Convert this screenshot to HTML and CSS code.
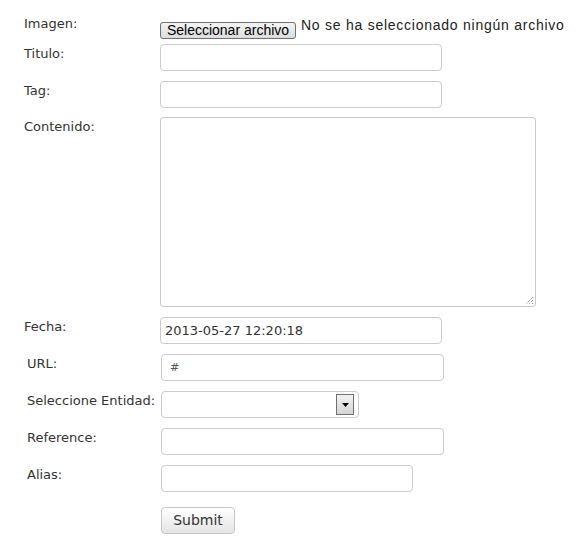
FILE: index.html
```html
<!DOCTYPE html>
<html lang="es">
<head>
<meta charset="utf-8">
<title>Formulario</title>
<link rel="stylesheet" href="styles.css">
</head>
<body>
<form class="form">
  <div class="group group-a">
    <div class="row row-file">
      <label class="label">Imagen:</label>
      <div class="file">
        <span class="file-btn">Seleccionar archivo</span>
        <span class="file-text">No se ha seleccionado ningún archivo</span>
      </div>
    </div>
    <div class="row">
      <label class="label">Titulo:</label>
      <div class="input w282"></div>
    </div>
    <div class="row">
      <label class="label">Tag:</label>
      <div class="input w282"></div>
    </div>
    <div class="row row-area">
      <label class="label">Contenido:</label>
      <div class="textarea">
        <svg class="grip" width="9" height="9" viewBox="0 0 9 9"><path d="M8 1 L1 8 M8 4 L4 8 M8 7 L7 8" stroke="#666" stroke-width="1" stroke-dasharray="1 1" fill="none"/></svg>
      </div>
    </div>
    <div class="row">
      <label class="label">Fecha:</label>
      <div class="input w282"><span class="value">2013-05-27 12:20:18</span></div>
    </div>
  </div>
  <div class="group group-b">
    <div class="row">
      <label class="label">URL:</label>
      <div class="input w283"><span class="value small">#</span></div>
    </div>
    <div class="row">
      <label class="label">Seleccione Entidad:</label>
      <div class="select">
        <span class="arrow"><svg width="7" height="4" viewBox="0 0 7 4"><path d="M0 0 H7 L3.5 4 Z" fill="#000"/></svg></span>
      </div>
    </div>
    <div class="row">
      <label class="label">Reference:</label>
      <div class="input w283"></div>
    </div>
    <div class="row">
      <label class="label">Alias:</label>
      <div class="input w252"></div>
    </div>
    <div class="row row-submit">
      <span class="label"></span>
      <span class="submit">Submit</span>
    </div>
  </div>
</form>
</body>
</html>
```
FILE: styles.css
```css
html, body {
  margin: 0;
  padding: 0;
  background: #fff;
}
body {
  font-family: "DejaVu Sans", Verdana, sans-serif;
  font-size: 13px;
  color: #333;
}
.form {
  padding-top: 16px;
}
.group {
  display: flex;
  flex-direction: column;
}
.group-a {
  padding-left: 24px;
  gap: 10px;
}
.group-a .label {
  width: 136px;
}
.group-b {
  padding-left: 27px;
  margin-top: 10px;
  gap: 10px;
}
.group-b .label {
  width: 134px;
}
.row {
  display: flex;
  align-items: flex-start;
}
.label {
  flex: none;
  line-height: 16px;
  margin-top: 2px;
  white-space: nowrap;
}
.row-file {
  margin-bottom: -5px;
}
.row-file .label {
  margin-top: 0;
}
.file {
  display: flex;
  align-items: flex-start;
  gap: 5px;
  font-family: "Liberation Sans", Arial, sans-serif;
  font-size: 14px;
  color: #222;
}
.file-btn {
  box-sizing: border-box;
  width: 136px;
  height: 17px;
  margin-top: 6px;
  line-height: 14px;
  text-align: center;
  border: 1px solid #707070;
  border-radius: 3px;
  background: linear-gradient(#f4f4f4, #dcdcdc);
  color: #000;
}
.file-text {
  line-height: 16px;
  margin-top: 1px;
  letter-spacing: 0.75px;
}
.input {
  box-sizing: border-box;
  height: 27px;
  border: 1px solid #cbcbcb;
  border-radius: 4px;
  background: #fff;
  display: flex;
  align-items: center;
  padding-left: 4px;
}
.w282 { width: 282px; }
.w283 { width: 283px; }
.w252 { width: 252px; }
.value {
  font-size: 13px;
  color: #333;
  line-height: 16px;
}
.value.small {
  font-size: 11px;
  padding-left: 4px;
  color: #555;
}
.row-area {
  margin-top: -1px;
}
.textarea {
  box-sizing: border-box;
  width: 376px;
  height: 190px;
  border: 1px solid #c8c8c8;
  border-radius: 3px;
  position: relative;
}
.grip {
  position: absolute;
  right: 1px;
  bottom: 1px;
}
.select {
  box-sizing: border-box;
  width: 198px;
  height: 27px;
  border: 1px solid #cbcbcb;
  border-radius: 4px;
  display: flex;
  justify-content: flex-end;
  align-items: flex-start;
  padding: 2px 4px 0 0;
}
.arrow {
  box-sizing: border-box;
  width: 18px;
  height: 21px;
  border: 1px solid #707070;
  background: linear-gradient(#f2f2f2, #d4d4d4);
  display: flex;
  align-items: center;
  justify-content: center;
}
.row-submit {
  margin-top: 5px;
}
.submit {
  box-sizing: border-box;
  width: 74px;
  height: 27px;
  border: 1px solid #c6c6c6;
  border-radius: 4px;
  background: linear-gradient(#ffffff, #e4e4e4);
  font-size: 14px;
  line-height: 25px;
  text-align: center;
  color: #333;
}
```
